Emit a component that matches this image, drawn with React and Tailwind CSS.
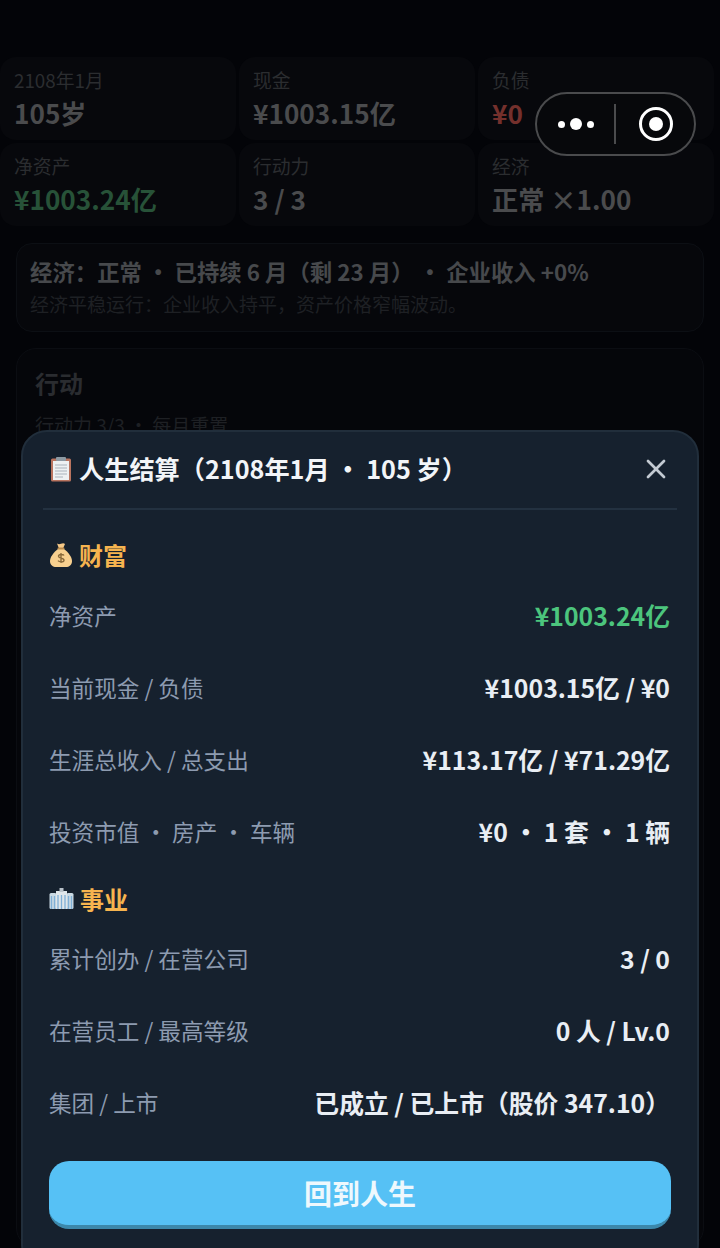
import React from "react";
import { X } from "lucide-react";

const FONT = "font-['Noto_Sans_CJK_SC',sans-serif]";

const STATS = [
  { label: "2108年1月", value: "105岁", color: "text-[#4a4b4d]" },
  { label: "现金", value: "¥1003.15亿", color: "text-[#4a4b4d]" },
  { label: "负债", value: "¥0", color: "text-[#74302c]" },
  { label: "净资产", value: "¥1003.24亿", color: "text-[#275238]" },
  { label: "行动力", value: "3 / 3", color: "text-[#4a4b4d]" },
  { label: "经济", value: "正常 ×1.00", color: "text-[#4a4b4d]" },
];

const WEALTH = [
  { label: "净资产", value: "¥1003.24亿", green: true },
  { label: "当前现金 / 负债", value: "¥1003.15亿 / ¥0" },
  { label: "生涯总收入 / 总支出", value: "¥113.17亿 / ¥71.29亿" },
  { label: "投资市值 · 房产 · 车辆", value: "¥0 · 1 套 · 1 辆" },
];

const CAREER = [
  { label: "累计创办 / 在营公司", value: "3 / 0" },
  { label: "在营员工 / 最高等级", value: "0 人 / Lv.0" },
  { label: "集团 / 上市", value: "已成立 / 已上市（股价 347.10）" },
];

const ClipboardIcon = () => (
  <svg width="22" height="26" viewBox="0 0 22 26" className="shrink-0">
    <rect x="1" y="2.500" width="20" height="23" rx="1.500" fill="#b9745f" />
    <rect x="3" y="5" width="16" height="19" fill="#eef1f2" />
    <rect x="6" y="1" width="10" height="4" rx="1" fill="#8d9aa3" />
    <path d="M5 9h12M5 12h12M5 15h12M5 18h12M5 21h8" stroke="#a9b4bb" strokeWidth="1.200" />
  </svg>
);

const MoneyBagIcon = () => (
  <svg width="24" height="26" viewBox="0 0 24 26" className="shrink-0">
    <path d="M8 1.500c1.500 1 2.500 1 4 .3 1.500-.7 3-.7 4 .2l-2 4.500h-4z" fill="#f6c987" />
    <path d="M9 7h6c4 3 8 8 8 12 0 4-3 6-6 6H7c-3 0-6-2-6-6 0-4 4-9 8-12z" fill="#f8d08f" />
    <rect x="8.500" y="5.500" width="7" height="2" rx="1" fill="#b98a4a" />
    <path d="M15 13.500c-.6-1.100-5.500-1.700-5.500.8 0 2.500 5.500 1.300 5.500 3.900 0 2.400-5 1.900-6 .5M12 11v10" fill="none" stroke="#8a6a3a" strokeWidth="1.400" />
  </svg>
);

const OfficeIcon = () => (
  <svg width="25" height="24" viewBox="0 0 25 24" className="shrink-0">
    <rect x="0.500" y="6" width="7" height="16" rx="1.500" fill="#c9d9e3" />
    <rect x="17.500" y="6" width="7" height="16" rx="1.500" fill="#c9d9e3" />
    <rect x="7" y="4" width="11" height="18" fill="#dfe6ea" />
    <rect x="10.500" y="1" width="4" height="4" fill="#b9c2c9" />
    <path d="M2.500 9v13M5.500 9v13M9 8v14M12.500 8v14M16 8v14M19.500 9v13M22.500 9v13" stroke="#7fb0d6" strokeWidth="1.300" />
  </svg>
);

const SectionTitle = ({ icon, children }) => (
  <div className="flex h-8 items-center gap-[6px] pl-[6px] text-[24px] font-bold text-[#f6b44f]">
    {icon}
    <span>{children}</span>
  </div>
);

const Row = ({ label, value, green }) => (
  <div className="flex h-[72px] items-center justify-between">
    <span className="text-[22.600px] text-[#8d9bb0]">{label}</span>
    <span className={`text-[24.800px] font-bold ${green ? "text-[#4cc57d]" : "text-[#e9eef4]"}`}>{value}</span>
  </div>
);

const CapsuleMenu = () => (
  <div className="absolute left-[535px] top-[92px] z-30 flex h-[64px] w-[161px] items-center rounded-full border-2 border-[#4a4b4d] bg-[#07080b]">
    <div className="flex w-[77px] items-center justify-center gap-[5px]">
      <span className="h-[7px] w-[7px] rounded-full bg-white" />
      <span className="h-[12px] w-[12px] rounded-full bg-white" />
      <span className="h-[7px] w-[7px] rounded-full bg-white" />
    </div>
    <div className="h-10 w-[2px] bg-[#4a4b4d]" />
    <div className="flex flex-1 items-center justify-center pl-[1px]">
      <div className="flex h-[34px] w-[34px] items-center justify-center rounded-full border-[3px] border-white">
        <span className="h-[14px] w-[14px] rounded-full bg-white" />
      </div>
    </div>
  </div>
);

export default function App() {
  return (
    <div className={`relative h-[1248px] w-[720px] overflow-hidden bg-[#030408] ${FONT}`}>
      {/* Dimmed page */}
      <div className="pt-[57px]">
        <div className="grid w-[714px] grid-cols-3 gap-[3px]">
          {STATS.map((s) => (
            <div key={s.label} className="h-[83px] rounded-2xl bg-[#07080c] pl-[14px] pt-[10px]">
              <div className="text-[18.800px] leading-[26px] text-[#2b2d30]">{s.label}</div>
              <div className={`mt-[2px] text-[26.200px] font-bold leading-[36px] ${s.color}`}>{s.value}</div>
            </div>
          ))}
        </div>

        <div className="mx-4 mt-[17px] h-[89px] rounded-2xl border border-[#0c0f14] bg-[#06070b] pl-[13px] pt-[10px]">
          <div className="text-[22.400px] font-bold leading-[34px] text-[#47494c]">
            经济：正常 · 已持续 6 月（剩 23 月） · 企业收入 +0%
          </div>
          <div className="mt-[2px] text-[19px] leading-[28px] text-[#1e2024]">
            经济平稳运行：企业收入持平，资产价格窄幅波动。
          </div>
        </div>

        <div className="mx-4 mt-4 h-[900px] rounded-[20px] border border-[#0b0d12] bg-[#05060a] pl-[18px] pt-4">
          <div className="text-[24px] font-bold leading-9 text-[#2a2c30]">行动</div>
          <div className="mt-[10px] text-[19px] leading-7 text-[#1e2024]">行动力 3/3 · 每月重置</div>
        </div>
      </div>

      <CapsuleMenu />

      {/* Summary modal */}
      <div className="absolute inset-0 z-20 flex items-start justify-center pt-[430px]">
        <div className="h-[840px] w-[678px] rounded-[26px] border-2 border-[#212e3b] bg-[#16212e] px-5">
          <div className="flex h-[78px] items-center justify-between border-b-2 border-[#233140] pb-[2px] pl-[7px] pr-[5px]">
            <div className="flex items-center gap-[7px] text-[25.200px] font-bold text-[#f2f5f8]">
              <ClipboardIcon />
              <span>人生结算（2108年1月 · 105 岁）</span>
            </div>
            <X size={32} strokeWidth={2} className="text-[#c3cad2]" />
          </div>

          <div className="mt-[29px]">
            <SectionTitle icon={<MoneyBagIcon />}>财富</SectionTitle>
          </div>
          <div className="mt-[9px] pl-[6px] pr-[7px]">
            {WEALTH.map((r) => (
              <Row key={r.label} {...r} />
            ))}
          </div>
          <div className="mt-[15px]">
            <SectionTitle icon={<OfficeIcon />}>事业</SectionTitle>
          </div>
          <div className="mt-2 pl-[6px] pr-[7px]">
            {CAREER.map((r) => (
              <Row key={r.label} {...r} />
            ))}
          </div>
          <button className="ml-[6px] mt-[22px] h-[68px] w-[622px] rounded-[20px] border-b-4 border-[#3c88ab] bg-[#56c1f5] text-[28px] font-bold text-[#eef8fd]">
            回到人生
          </button>
        </div>
      </div>
    </div>
  );
}
